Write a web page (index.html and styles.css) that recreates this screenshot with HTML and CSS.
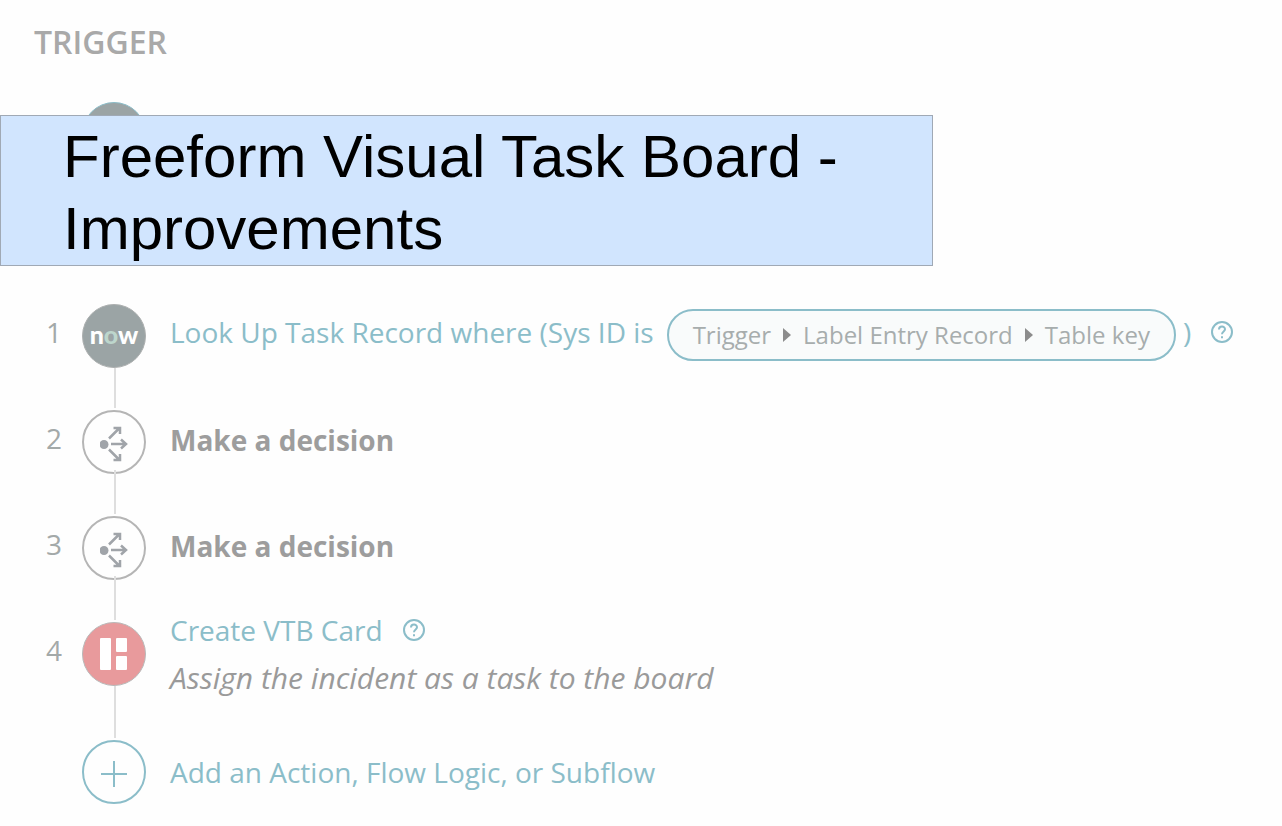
FILE: index.html
```html
<!DOCTYPE html>
<html lang="en">
<head>
    <meta charset="UTF-8">
    <meta name="viewport" content="width=device-width, initial-scale=1.0">
    <title>Freeform Visual Task Board - Improvements</title>
    <link rel="stylesheet" href="styles.css">
</head>
<body>
    <div class="banner">
        <h1>Freeform Visual Task Board -<br>Improvements</h1>
    </div>

    <main>
        <h2 class="section-title">TRIGGER</h2>
        <div class="step">
            <span class="step-number"></span>
            <span class="marker marker-now marker-trigger"></span>
        </div>

        <div class="steps">
            <div class="step">
                <span class="step-number">1</span>
                <span class="marker marker-now linked"><span class="now-logo">n<span class="now-o">o</span>w</span></span>
                <div class="step-body step-line">
                    <a href="#" class="step-link">Look Up Task Record where (Sys ID is</a>
                    <span class="pill">
                        <span>Trigger</span>
                        <svg class="caret" width="8" height="14" viewBox="0 0 8 14"><path d="M0 0L8 7L0 14Z"/></svg>
                        <span>Label Entry Record</span>
                        <svg class="caret" width="8" height="14" viewBox="0 0 8 14"><path d="M0 0L8 7L0 14Z"/></svg>
                        <span>Table key</span>
                    </span>
                    <span class="paren">)</span>
                    <button type="button" class="help" aria-label="Help">
                        <svg width="22" height="22" viewBox="0 0 22 22">
                            <circle cx="11" cy="11" r="10"/>
                            <path d="M8 8.5C8 4.6 14 4.6 14 8.3C14 10.5 11 10.4 11 13.2M11 15.2V17.2"/>
                        </svg>
                    </button>
                </div>
            </div>

            <div class="step">
                <span class="step-number">2</span>
                <span class="marker marker-logic linked">
                    <svg width="28" height="36" viewBox="0 0 28 36">
                        <circle class="dot" cx="4" cy="18.5" r="4.5"/>
                        <path d="M9 12.5L19.5 2M13.5 2H20V8M11 18H26M21 13.5L26 18L21 22.5M9 23.5L19.5 34M13.5 34H20V28"/>
                    </svg>
                </span>
                <div class="step-body">
                    <strong class="step-logic">Make a decision</strong>
                </div>
            </div>

            <div class="step">
                <span class="step-number">3</span>
                <span class="marker marker-logic linked">
                    <svg width="28" height="36" viewBox="0 0 28 36">
                        <circle class="dot" cx="4" cy="18.5" r="4.5"/>
                        <path d="M9 12.5L19.5 2M13.5 2H20V8M11 18H26M21 13.5L26 18L21 22.5M9 23.5L19.5 34M13.5 34H20V28"/>
                    </svg>
                </span>
                <div class="step-body">
                    <strong class="step-logic">Make a decision</strong>
                </div>
            </div>

            <div class="step">
                <span class="step-number">4</span>
                <span class="marker marker-board linked">
                    <svg width="28" height="32" viewBox="0 0 28 32">
                        <rect x="0" y="0" width="11" height="32" rx="1"/>
                        <rect x="16" y="0" width="11" height="14" rx="1"/>
                        <rect x="16" y="18" width="11" height="14" rx="1"/>
                    </svg>
                </span>
                <div>
                    <div class="step-line">
                        <a href="#" class="step-link">Create VTB Card</a>
                        <button type="button" class="help" aria-label="Help">
                            <svg width="22" height="22" viewBox="0 0 22 22">
                                <circle cx="11" cy="11" r="10"/>
                                <path d="M8 8.5C8 4.6 14 4.6 14 8.3C14 10.5 11 10.4 11 13.2M11 15.2V17.2"/>
                            </svg>
                        </button>
                    </div>
                    <em class="step-note">Assign the incident as a task to the board</em>
                </div>
            </div>

            <button type="button" class="step step-add">
                <span class="step-number"></span>
                <span class="marker marker-add">
                    <svg width="26" height="26" viewBox="0 0 26 26"><path d="M13 0V26M0 13H26"/></svg>
                </span>
                <span>Add an Action, Flow Logic, or Subflow</span>
            </button>
        </div>
    </main>
</body>
</html>
```

FILE: styles.css
```css
body {
    margin: 0;
    background-color: #fefefe;
    font-family: "Open Sans", "Noto Sans", sans-serif;
    font-size: 28px;
    line-height: 48px;
    color: #9b9b9b;
}

main {
    padding-left: 34px;
}

button {
    border: none;
    padding: 0;
    background: none;
    font: inherit;
    color: inherit;
    cursor: pointer;
}

/* Title laid over the flow */
.banner {
    position: absolute;
    top: 115px;
    left: 0;
    z-index: 1;
    box-sizing: border-box;
    padding: 5px 94px 0 62px;
    border: 1px solid #a0a9b5;
    background-color: #d1e5fe;
}

.banner h1 {
    margin: 0;
    font-family: "Liberation Sans", Arial, sans-serif;
    font-size: 60px;
    font-weight: normal;
    line-height: 72px;
    color: #000;
    white-space: nowrap;
}

.section-title {
    margin: 0;
    padding-bottom: 2px;
    font-size: 32px;
    font-weight: 600;
    line-height: 84px;
    color: #a9a9a9;
}

.steps {
    display: flex;
    flex-direction: column;
    gap: 10px;
    margin-top: 106px;
}

.step {
    display: flex;
    align-items: center;
    min-height: 96px;
    text-align: left;
}

.step-number {
    width: 36px;
    margin-left: 12px;
    padding-bottom: 8px;
    color: #a3a9a9;
}

.step-body {
    padding-bottom: 4px;
}

.marker {
    position: relative;
    display: flex;
    flex-shrink: 0;
    align-items: center;
    justify-content: center;
    box-sizing: border-box;
    width: 64px;
    height: 64px;
    margin-right: 24px;
    border: 2px solid #b5b5b5;
    border-radius: 50%;
}

.marker svg {
    fill: none;
    stroke-width: 2;
}

/* Connector down to the next step */
.linked::after {
    content: "";
    position: absolute;
    top: 63px;
    left: 31px;
    width: 2px;
    height: 40px;
    background-color: #dedede;
}

.marker-now {
    border: 1px solid #adb0b0;
    background-color: #9ba4a5;
}

.marker-trigger {
    border-color: #8bbcc8;
}

.now-logo {
    padding-bottom: 4px;
    font-family: Lato, sans-serif;
    font-size: 25px;
    font-weight: 900;
    color: #fff;
}

.now-o {
    color: #bdd6cc;
}

.marker-logic svg {
    margin-top: 4px;
    stroke: #a0a4a9;
    stroke-width: 2.5;
}

.marker-logic .dot {
    fill: #a0a4a9;
    stroke: none;
}

.marker-logic.linked::after {
    top: 58px;
    left: 30px;
    height: 44px;
}

.marker-board {
    border: 1px solid #b9b9b9;
    background-color: #e89a9c;
}

.marker-board svg {
    fill: #fff;
}

.marker-board.linked::after {
    height: 52px;
}

.marker-add {
    border-color: #8bbdc9;
}

.marker-add svg {
    margin-top: 4px;
    stroke: #8bbdc9;
}

.step-line {
    display: flex;
    align-items: flex-start;
    white-space: nowrap;
}

.step-link,
.paren {
    color: #8bbdc9;
    text-decoration: none;
}

.step-logic {
    font-weight: 700;
    color: #9d9d9d;
}

.step-note {
    display: block;
    font-size: 30px;
    color: #9a9a9a;
}

.pill {
    display: flex;
    align-items: center;
    gap: 12px;
    height: 48px;
    margin: 1px 7px 0 13px;
    padding: 0 24px;
    border: 2px solid #8bbdc9;
    border-radius: 26px;
    background-color: #f9fbfb;
    font-size: 24px;
    color: #a7adad;
}

.caret {
    fill: #8c8c8c;
}

.help {
    display: flex;
    align-items: center;
    height: 48px;
    margin-left: 20px;
}

.help svg {
    fill: none;
    stroke: #8bbdc9;
    stroke-width: 2;
}

.step-add {
    margin-top: 12px;
    color: #8bbdc9;
}
```
